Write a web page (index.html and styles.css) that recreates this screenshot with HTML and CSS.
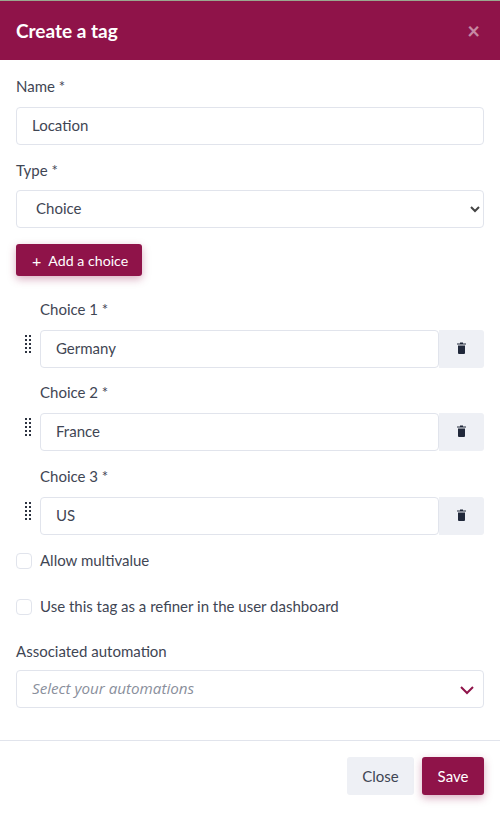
FILE: index.html
```html
<!DOCTYPE html>
<html lang="en">
<head>
    <meta charset="UTF-8">
    <meta name="viewport" content="width=device-width, initial-scale=1.0">
    <title>Create a tag</title>
    <link rel="stylesheet" href="styles.css">
</head>
<body>
    <div class="modal">
        <header class="modal-header">
            <h1>Create a tag</h1>
            <span class="close-x">&times;</span>
        </header>

        <div class="modal-body">
            <div class="field field-name">
                <label>Name *</label>
                <input class="control" type="text" value="Location">
            </div>

            <div class="field field-type">
                <label>Type *</label>
                <div class="select-wrap">
                    <div class="control select-box">Choice</div>
                    <svg class="select-arrow" width="10" height="8" viewBox="0 0 10 8"><path d="M1 2l4 4 4-4" fill="none" stroke="#444" stroke-width="2"/></svg>
                </div>
            </div>

            <button class="btn btn-primary btn-add"><span class="plus">+</span>Add a choice</button>

            <div class="choices">
                <div class="choice">
                    <label>Choice 1 *</label>
                    <div class="choice-row">
                        <span class="grip"></span>
                        <input class="control" type="text" value="Germany">
                        <button class="trash">
                            <svg width="9" height="12" viewBox="0 0 9 12"><path d="M0 1.5h9v1H0zM3 .5h3v1H3z" fill="#20283a"/><path d="M1 3.5h7V11a1 1 0 0 1-1 1H2a1 1 0 0 1-1-1z" fill="#20283a"/></svg>
                        </button>
                    </div>
                </div>
                <div class="choice">
                    <label>Choice 2 *</label>
                    <div class="choice-row">
                        <span class="grip"></span>
                        <input class="control" type="text" value="France">
                        <button class="trash">
                            <svg width="9" height="12" viewBox="0 0 9 12"><path d="M0 1.5h9v1H0zM3 .5h3v1H3z" fill="#20283a"/><path d="M1 3.5h7V11a1 1 0 0 1-1 1H2a1 1 0 0 1-1-1z" fill="#20283a"/></svg>
                        </button>
                    </div>
                </div>
                <div class="choice">
                    <label>Choice 3 *</label>
                    <div class="choice-row">
                        <span class="grip"></span>
                        <input class="control" type="text" value="US">
                        <button class="trash">
                            <svg width="9" height="12" viewBox="0 0 9 12"><path d="M0 1.5h9v1H0zM3 .5h3v1H3z" fill="#20283a"/><path d="M1 3.5h7V11a1 1 0 0 1-1 1H2a1 1 0 0 1-1-1z" fill="#20283a"/></svg>
                        </button>
                    </div>
                </div>
            </div>

            <div class="check check-first"><span class="box"></span>Allow multivalue</div>
            <div class="check"><span class="box"></span>Use this tag as a refiner in the user dashboard</div>

            <div class="field field-auto">
                <label>Associated automation</label>
                <div class="select-wrap">
                    <div class="control select-box placeholder">Select your automations</div>
                    <svg class="select-arrow arrow-big" width="16" height="10" viewBox="0 0 16 10"><path d="M2 2l6 6 6-6" fill="none" stroke="#8f1349" stroke-width="2"/></svg>
                </div>
            </div>
        </div>

        <footer class="modal-footer">
            <button class="btn btn-light btn-close">Close</button>
            <button class="btn btn-primary btn-save">Save</button>
        </footer>
    </div>
</body>
</html>
```

FILE: styles.css
```css
:root {
    --primary-color: #8f1349;
    --border-color: #e1e4ec;
    --text-dark: #3f4654;
    --button-light: #eef0f5;
}

* {
    box-sizing: border-box;
}

body {
    margin: 0;
    background-color: #ffffff;
    font-family: 'Lato', sans-serif;
    font-size: 15px;
    color: var(--text-dark);
}

.modal {
    border-top: 1px solid #9aa88f;
}

.modal-header {
    height: 59px;
    padding: 0 16px;
    display: flex;
    justify-content: space-between;
    align-items: center;
    background-color: var(--primary-color);
    color: #ffffff;
}

.modal-header h1 {
    margin: 0;
    font-size: 19px;
    font-weight: 700;
}

.close-x {
    margin-right: 4px;
    font-size: 22px;
    font-weight: 700;
    opacity: 0.5;
}

.modal-body {
    padding: 17px 16px 32px;
    border-bottom: 1px solid var(--border-color);
}

label {
    display: block;
    height: 20px;
    line-height: 18px;
}

.field label {
    margin-bottom: 10px;
}

.field-type {
    margin-top: 16px;
}

.field-type label {
    margin-bottom: 9px;
}

.control {
    display: block;
    width: 100%;
    height: 38px;
    padding: 0 15px 2px;
    border: 1px solid var(--border-color);
    border-radius: 4px;
    background-color: #ffffff;
    font-family: 'Lato', sans-serif;
    font-size: 15px;
    line-height: 34px;
    color: var(--text-dark);
    outline: none;
}

.select-wrap {
    position: relative;
}

.select-box {
    padding-left: 19px;
}

.select-arrow {
    position: absolute;
    right: 4px;
    top: 15px;
}

.arrow-big {
    right: 9px;
    top: 15px;
}

.placeholder {
    padding-left: 15px;
    font-family: 'Open Sans', sans-serif;
    font-size: 15.2px;
    font-style: italic;
    color: #8a8f9c;
}

.btn {
    height: 38px;
    padding: 0;
    border: none;
    border-radius: 3px;
    font-family: 'Lato', sans-serif;
    font-size: 15px;
}

.btn-primary {
    background-color: var(--primary-color);
    color: #ffffff;
    box-shadow: 0 3px 8px rgba(143, 19, 73, 0.35);
}

.btn-light {
    background-color: var(--button-light);
    color: var(--text-dark);
}

.btn-close {
    width: 67px;
}

.btn-save {
    width: 62px;
}

.btn-add {
    display: flex;
    align-items: center;
    width: 126px;
    height: 32px;
    margin-top: 16px;
    padding-left: 16px;
    font-size: 14.2px;
    white-space: nowrap;
}

.plus {
    margin-right: 7px;
    font-size: 16px;
}

.choices {
    margin-top: 24px;
    padding-left: 24px;
}

.choice {
    margin-bottom: 15px;
}

.choice:nth-child(2) {
    margin-bottom: 16px;
}

.choice label {
    margin-bottom: 10px;
}

.choice-row {
    position: relative;
    display: flex;
}

.choice-row .control {
    flex: 1;
}

/* drag handle, sits left of the input */
.grip {
    position: absolute;
    left: -16px;
    top: 4px;
    width: 8px;
    height: 20px;
    background-image: radial-gradient(circle, #2d3340 1.2px, transparent 1.4px);
    background-size: 4px 4px;
}

.trash {
    width: 45px;
    height: 38px;
    border: none;
    border-radius: 0 3px 3px 0;
    background-color: var(--button-light);
}

.check {
    display: flex;
    align-items: center;
    height: 20px;
    margin-top: 26px;
}

.check-first {
    margin-top: 15px;
}

.box {
    width: 16px;
    height: 16px;
    margin-top: 2px;
    margin-right: 8px;
    border: 1px solid var(--border-color);
    border-radius: 4px;
}

.field-auto {
    margin-top: 26px;
}

.field-auto label {
    margin-bottom: 8px;
}

.modal-footer {
    display: flex;
    justify-content: flex-end;
    gap: 8px;
    padding: 16px;
}
```
